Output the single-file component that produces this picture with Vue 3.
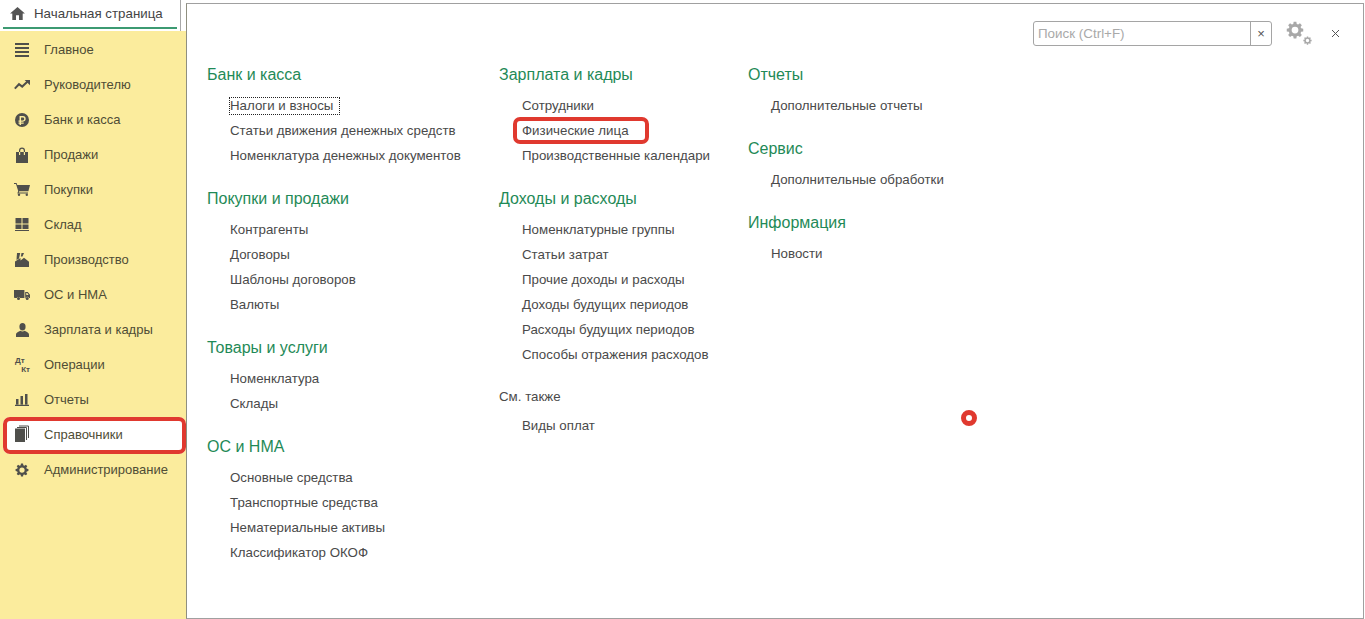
<script setup>
const nav = [
  { label: 'Главное', icon: 'menu' }, { label: 'Руководителю', icon: 'trend' }, { label: 'Банк и касса', icon: 'rub' },
  { label: 'Продажи', icon: 'bag' }, { label: 'Покупки', icon: 'cart' }, { label: 'Склад', icon: 'store' },
  { label: 'Производство', icon: 'factory' }, { label: 'ОС и НМА', icon: 'truck' }, { label: 'Зарплата и кадры', icon: 'user' },
  { label: 'Операции', icon: 'dtkt' }, { label: 'Отчеты', icon: 'bars' }, { label: 'Справочники', icon: 'books', active: true },
  { label: 'Администрирование', icon: 'gear' },
]
const columns = [
  { cls: 'col-a', groups: [
    { title: 'Банк и касса', items: ['Налоги и взносы', 'Статьи движения денежных средств', 'Номенклатура денежных документов'] },
    { title: 'Покупки и продажи', items: ['Контрагенты', 'Договоры', 'Шаблоны договоров', 'Валюты'] },
    { title: 'Товары и услуги', items: ['Номенклатура', 'Склады'] },
    { title: 'ОС и НМА', items: ['Основные средства', 'Транспортные средства', 'Нематериальные активы', 'Классификатор ОКОФ'] },
  ] },
  { cls: 'col-b', groups: [
    { title: 'Зарплата и кадры', items: ['Сотрудники', 'Физические лица', 'Производственные календари'] },
    { title: 'Доходы и расходы', items: ['Номенклатурные группы', 'Статьи затрат', 'Прочие доходы и расходы', 'Доходы будущих периодов', 'Расходы будущих периодов', 'Способы отражения расходов'] },
  ], also: ['Виды оплат'] },
  { cls: 'col-c', groups: [
    { title: 'Отчеты', items: ['Дополнительные отчеты'] },
    { title: 'Сервис', items: ['Дополнительные обработки'] },
    { title: 'Информация', items: ['Новости'] },
  ] },
]
const gearPath = 'M10.2 1h3.6l.5 2.9 1.9.8 2.4-1.7 2.5 2.5-1.7 2.4.8 1.9 2.8.5v3.6l-2.8.5-.8 1.9 1.7 2.4-2.5 2.5-2.4-1.7-1.9.8-.5 2.9h-3.6l-.5-2.9-1.9-.8-2.4 1.7-2.5-2.5 1.7-2.4-.8-1.9-2.8-.5v-3.6l2.8-.5.8-1.9-1.7-2.4 2.5-2.5 2.4 1.7 1.9-.8zM12 7.500a4.500 4.500 0 1 0 0 9 4.500 4.500 0 0 0 0-9z'
</script>

<template>
  <div class="app">
    <aside class="left">
      <div class="tabbar">
        <div class="tab">
          <svg class="home" viewBox="0 0 16 14" width="15" height="13"><path d="M8 0 L16 7 L13.6 7 L13.6 14 L9.6 14 L9.6 9 L6.4 9 L6.4 14 L2.4 14 L2.4 7 L0 7 Z" /></svg>
          <span>Начальная страница</span>
        </div>
      </div>
      <nav class="sidebar">
        <div v-for="n in nav" :key="n.label" class="nav-item" :class="{ active: n.active }">
          <span class="nav-icon">
            <svg v-if="n.icon === 'menu'" viewBox="0 0 14 14" width="14" height="14"><path d="M0 0h14v2H0zM0 4h14v2H0zM0 8h14v2H0zM0 12h14v2H0z" /></svg>
            <svg class="wide" v-else-if="n.icon === 'trend'" viewBox="0 0 16 10" width="16" height="10"><path class="ln" d="M0.8 8.600 L5 4.200 L8.200 6.600 L13.600 1.600" /><path d="M10.600 0 H16 V5.200 Z" /></svg>
            <svg v-else-if="n.icon === 'rub'" viewBox="0 0 16 16" width="14" height="14"><path fill-rule="evenodd" d="M8 0a8 8 0 1 1 0 16A8 8 0 0 1 8 0zM5.200 3.500v5H4v1.400h1.200v1H4v1.300h1.200v1.400h1.700v-1.400h3v-1.300h-3v-1h2.200c2 0 3.100-1.200 3.100-3.200S11.100 3.500 9.100 3.500zM6.900 5h2.100c1 0 1.500.6 1.500 1.700S10 8.500 9 8.500H6.900z" /></svg>
            <svg class="inset" v-else-if="n.icon === 'bag'" viewBox="0 0 12 16" width="12" height="16"><path fill-rule="evenodd" d="M0 5h3V3.500a3 3 0 0 1 6 0V5h3v11H0zM4.200 5h3.600V3.500a1.800 1.800 0 0 0-3.600 0zM3 5v3h1.200V5zM7.800 5v3H9V5z" /></svg>
            <svg class="wide" v-else-if="n.icon === 'cart'" viewBox="0 0 16 13" width="16" height="13"><path d="M0 0h2.600L3.300 2H16l-1.600 6.300H5.300L4.700 9.600H14v1H3.300l.9-2.600L2 1H0z" /><circle cx="5" cy="11.800" r="1.200" /><circle cx="12.800" cy="11.800" r="1.200" /></svg>
            <svg v-else-if="n.icon === 'store'" viewBox="0 0 14 13" width="14" height="13"><path d="M.5 0h6v5.500h-6zM7.500 0h6v5.500h-6zM.5 6.500h6V11h-6zM7.500 6.500h6V11h-6zM0 12h14v1H0z" /></svg>
            <svg v-else-if="n.icon === 'factory'" viewBox="0 0 14 14" width="14" height="14"><path d="M2 0h3.200L4 5.500 1.500 7z" /><path d="M6.500 0H9L7.500 3.500H5.800z" /><path d="M0 14V8.500L5.500 5v2.500L9 4.800 14 8.800V14z" /></svg>
            <svg class="wide" v-else-if="n.icon === 'truck'" viewBox="0 0 16 10" width="16" height="10"><path d="M0 0h10.400v8H6.200a1.900 1.900 0 0 0-3.400 0H.8L0 7.400z" /><path fill-rule="evenodd" d="M11.200 2h2.600L16 4.800V8h-1a1.900 1.900 0 0 0-3.500 0h-.3zM12.300 3v2h2.300l-1.300-2z" /><circle cx="4.500" cy="8.500" r="1.500" /><circle cx="13.200" cy="8.500" r="1.500" /></svg>
            <svg class="inset" v-else-if="n.icon === 'user'" viewBox="0 0 14 15" width="13" height="14"><ellipse cx="7" cy="4" rx="3.300" ry="4" /><path d="M0 15v-2.500C0 10.200 3 9.400 4.800 8.400c1.200 1 3.200 1 4.400 0C11 9.400 14 10.200 14 12.500V15z" /></svg>
            <span v-else-if="n.icon === 'dtkt'" class="dtkt"><b>Дт</b><b>Кт</b></span>
            <svg v-else-if="n.icon === 'bars'" viewBox="0 0 14 12" width="14" height="12"><path d="M1 5h2.500v5.500H1zM5.500 2H8v8.500H5.500zM10 0h2.500v10.500H10zM0 10.800h14V12H0z" /></svg>
            <svg v-else-if="n.icon === 'books'" viewBox="0 0 14 15" width="14" height="15"><path d="M0 1.500h10v13.500H0z" /><path class="ln thin" d="M2 .5H11.500V13M4 -1H13.500V11" /></svg>
            <svg v-else viewBox="0 0 24 24" width="14" height="14"><path fill-rule="evenodd" :d="gearPath" /></svg>
          </span>
          <span class="nav-label">{{ n.label }}</span>
        </div>
      </nav>
    </aside>

    <main class="panel">
      <div class="toolbar">
        <div class="search">
          <span class="placeholder">Поиск (Ctrl+F)</span>
          <span class="clear">×</span>
        </div>
        <span class="gears">
          <svg class="gear-big" viewBox="0 0 24 24" width="18" height="18"><path fill-rule="evenodd" :d="gearPath" /></svg>
          <svg class="gear-small" viewBox="0 0 24 24" width="9" height="9"><path fill-rule="evenodd" :d="gearPath" /></svg>
        </span>
        <svg class="close" viewBox="0 0 9 9" width="9" height="9"><path d="M1 1l7 7M8 1L1 8" /></svg>
      </div>

      <div class="columns">
        <section v-for="c in columns" :key="c.cls" class="column" :class="c.cls">
          <div v-for="g in c.groups" :key="g.title" class="group">
            <h2>{{ g.title }}</h2>
            <a v-for="it in g.items" :key="it" class="link">
              <span :class="{ focus: it === 'Налоги и взносы', marked: it === 'Физические лица' }">{{ it }}</span>
            </a>
          </div>
          <div v-if="c.also" class="also">
            <div class="also-title">См. также</div>
            <a v-for="it in c.also" :key="it" class="link"><span>{{ it }}</span></a>
          </div>
        </section>
      </div>

      <span class="dot"></span>
    </main>
  </div>
</template>

<style>
html, body { margin: 0; background: #fff; }
</style>

<style scoped>
.app {
  display: flex;
  width: 1365px;
  height: 619px;
  overflow: hidden;
  background: #fff;
  font-family: "Liberation Sans", Arial, sans-serif;
  color: #4b4b40;
}
.left { width: 186px; flex: none; display: flex; flex-direction: column; }
.tabbar { height: 31px; flex: none; box-sizing: border-box; padding: 0 3px 0 3px; border-right: 1px solid #a8a8a8; margin-right: 5px; }
.tab {
  box-sizing: border-box;
  height: 29px;
  border-bottom: 2px solid #3c9a72;
  padding-left: 7px;
  display: flex;
  align-items: center;
  gap: 9px;
  font-size: 13.3px;
  color: #444;
}
.home { fill: #555; flex: none; }
.sidebar {
  flex: 1;
  box-sizing: border-box;
  background: #fbec9d;
  padding-top: 1px;
  display: flex;
  flex-direction: column;
}
.nav-item {
  height: 35px;
  flex: none;
  display: flex;
  align-items: center;
  box-sizing: border-box;
  padding-left: 15px;
  font-size: 13px;
  color: #4f4d36;
  position: relative;
}
.nav-icon { width: 29px; flex: none; display: flex; align-items: center; }
.nav-icon svg { fill: #4f4f4b; display: block; overflow: visible; }
.nav-icon svg.wide { margin-left: -1px; margin-right: 1px; }
.nav-icon svg.inset { margin-left: 1px; }
.ln { fill: none !important; stroke: #4f4f4b; stroke-width: 2; }
.ln.thin { stroke-width: 1; }
.dtkt { display: flex; flex-direction: column; width: 15px; font-size: 8px; line-height: 9px; color: #4f4f4b; }
.dtkt b:last-child { align-self: flex-end; }
.nav-item.active {
  background: #fff;
  z-index: 1;
  margin-left: 3px;
  padding-left: 12px;
  padding-bottom: 2px;
  height: 37px;
  margin-bottom: -2px;
  border-radius: 7px;
  width: 183px;
}
.nav-item.active::after {
  content: "";
  position: absolute;
  inset: 0;
  border: 4px solid #e0392f;
  border-radius: 7px;
}
.panel {
  flex: 1;
  position: relative;
  margin: 3px 1px 0 0;
  box-sizing: border-box;
  border: 1px solid #a0a0a0;
  border-left-color: #8f8f80;
  background: #fff;
}
.toolbar {
  position: absolute;
  top: 17px;
  right: 23px;
  display: flex;
  align-items: center;
}
.search {
  width: 239px;
  height: 25px;
  box-sizing: border-box;
  border: 1px solid #a5a5a5;
  border-radius: 3px;
  display: flex;
  font-size: 13.4px;
  color: #a9a9a9;
}
.placeholder { flex: 1; padding-left: 4px; line-height: 23px; }
.clear { width: 20px; border-left: 1px solid #a5a5a5; text-align: center; color: #555; line-height: 23px; font-size: 13px; }
.gears { position: relative; width: 27px; height: 25px; margin-left: 14px; display: block; }
.gear-big { position: absolute; left: 0; top: 0; fill: #a8a8a8; }
.gear-small { position: absolute; left: 17px; top: 15px; fill: #a8a8a8; }
.close { margin-left: 18px; margin-top: -1px; fill: none; stroke: #555; stroke-width: 1; }
.columns { display: flex; padding: 58px 0 0 20px; }
.column { flex: none; }
.col-a { width: 292px; }
.col-b { width: 249px; }
.group { margin-bottom: 18px; }
h2 {
  margin: 0 0 6px;
  height: 25px;
  line-height: 25px;
  font-size: 16px;
  font-weight: normal;
  color: #1f8a57;
}
.link {
  display: block;
  height: 25px;
  line-height: 25px;
  padding-left: 23px;
  font-size: 13.3px;
  color: #4a4a4a;
  white-space: nowrap;
}
.link span { position: relative; display: inline-block; }
.focus { outline: 1px dotted #222; outline-offset: 0; line-height: 16px; padding-right: 6px; }
.marked::after {
  content: "";
  position: absolute;
  left: -9px;
  right: -20px;
  top: -1px;
  bottom: -1px;
  border: 4px solid #e0392f;
  border-radius: 7px;
}
.also { margin-top: -1px; }
.also-title { height: 25px; line-height: 25px; font-size: 13.3px; color: #4a4a4a; margin-bottom: 4px; }
.dot {
  position: absolute;
  left: 774px;
  top: 406px;
  width: 6px;
  height: 6px;
  border: 5px solid #e0392f;
  border-radius: 50%;
  background: #fff;
}
</style>
